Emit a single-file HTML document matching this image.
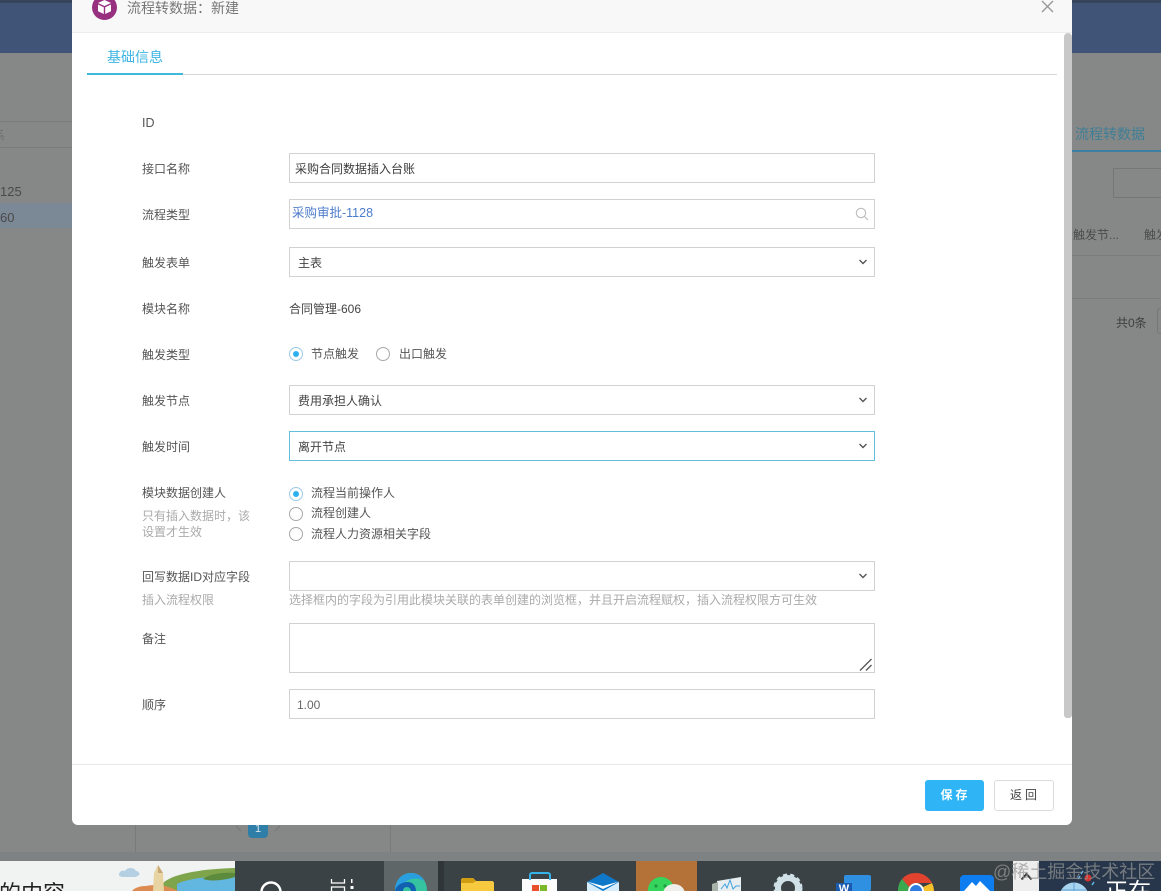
<!DOCTYPE html>
<html lang="zh">
<head>
<meta charset="utf-8">
<title>流程转数据：新建</title>
<style>
html,body{margin:0;padding:0;width:1161px;height:891px;overflow:hidden}
body{font-family:"Liberation Sans","Noto Sans CJK SC",sans-serif;font-size:12px;color:#444}
#root{position:relative;width:1161px;height:891px;overflow:hidden;background:#868787}
.a{position:absolute;white-space:nowrap}
.t{position:absolute;white-space:nowrap;line-height:16px}
.box{position:absolute;left:289px;width:586px;box-sizing:border-box;border:1px solid #d2d2d2;background:#fff;line-height:30px;padding-left:8px;color:#444}
.lab{position:absolute;left:142px;white-space:nowrap;line-height:16px;color:#555}
.hint{position:absolute;white-space:nowrap;line-height:16px;color:#aaa}
.chev{position:absolute;left:858px;width:10px;height:6px}
.r{position:absolute;width:14px;height:14px;box-sizing:border-box;border:1px solid #a8a8a8;border-radius:50%;background:#fff}
.r.on{border-color:#9cc9e6}
.r.on:after{content:"";position:absolute;left:3px;top:3px;width:6px;height:6px;border-radius:50%;background:#2db0ee}
</style>
</head>
<body>
<div id="root">
<!-- background page -->
<div class="a" style="left:0;top:0;width:1161px;height:53px;background:#3f5476"></div>
<div class="a" style="left:0;top:0;width:1161px;height:3px;background:#364559"></div>
<div class="a" style="left:0;top:121px;width:72px;height:27px;border-top:1px solid #7b7b7b;border-bottom:1px solid #7b7b7b;box-sizing:border-box"></div>
<div class="t" style="left:-7px;top:128px;color:#6e6e6e">系</div>
<div class="a" style="left:0;top:203px;width:72px;height:25px;background:#7b8896"></div>
<div class="t" style="left:0;top:184px;color:#4a4a4a;font-size:13px">125</div>
<div class="t" style="left:0;top:210px;color:#4a4a4a;font-size:13px">60</div>
<div class="t" style="left:1075px;top:126px;color:#3f7f95;font-size:14px">流程转数据</div>
<div class="a" style="left:1072px;top:150px;width:89px;height:2px;background:#3d7fa3"></div>
<div class="a" style="left:1113px;top:168px;width:60px;height:30px;box-sizing:border-box;border:1px solid #767676"></div>
<div class="t" style="left:1073px;top:227px;color:#4c4c4c">触发节...</div>
<div class="t" style="left:1144px;top:227px;color:#4c4c4c">触发</div>
<div class="a" style="left:1072px;top:255px;width:89px;height:1px;background:#7c7c7c"></div>
<div class="a" style="left:1072px;top:298px;width:89px;height:1px;background:#7c7c7c"></div>
<div class="t" style="left:1116px;top:315px;color:#3f3f3f">共0条</div>
<div class="a" style="left:1157px;top:308px;width:10px;height:26px;box-sizing:border-box;border:1px solid #767676;border-radius:3px"></div>
<div class="a" style="left:135px;top:825px;width:1px;height:27px;background:#7a7a7a"></div>
<div class="a" style="left:390px;top:825px;width:1px;height:27px;background:#7a7a7a"></div>
<div class="a" style="left:248px;top:825px;width:20px;height:13px;background:#2f7ea8;border-radius:0 0 4px 4px;color:#d5e4ec;text-align:center;line-height:8px;font-size:11px">1</div>
<svg class="a" style="left:234px;top:825px" width="48" height="10"><path d="M2 1l5 5M46 1l-5 5" stroke="#777" stroke-width="1" fill="none"/></svg>

<!-- taskbar -->
<div class="a" style="left:0;top:861px;width:1161px;height:30px;background:#3b4245"></div>
<div class="a" style="left:0;top:852px;width:1161px;height:9px;background:#7e8283"></div>
<div class="a" style="left:0;top:861px;width:235px;height:30px;background:#f1f3f3;overflow:hidden">
  <div class="a" style="left:-1px;top:20px;font-size:22px;line-height:26px;color:#222">的内容</div>
  <svg class="a" style="left:105px;top:0" width="130" height="30" viewBox="0 0 130 30">
    <path d="M14 14c0-4 4-5 6-4 2-4 9-4 11 0 3 0 4 3 3 4-1 1-3 2-5 2H18c-2 0-4-1-4-2z" fill="#b4cfe2"/>
    <path d="M58 22c8-8 34-14 72-15v23H50z" fill="#7ea54c"/>
    <path d="M72 23c12-6 34-8 58-8v15H72z" fill="#62b7e0"/>
    <path d="M98 18c6-5 20-7 32-6v4c-10 3-24 5-32 2z" fill="#5d8b3d"/>
    <path d="M27 30c3-4 10-5 14-5 8-2 22-1 32 5z" fill="#dc8b52"/>
    <path d="M48 30l1-18 4-8 5 8 1 18z" fill="#e8d3a2"/>
    <path d="M53 4l5 8h-5z" fill="#c9a878"/>
  </svg>
</div>
<svg class="a" style="left:258px;top:880px" width="26" height="11"><circle cx="13" cy="12" r="9.500" fill="none" stroke="#fff" stroke-width="2.400"/></svg>
<svg class="a" style="left:330px;top:878px" width="26" height="13"><path d="M1.500 1v4h13V1M1.500 13V9h13v4" fill="none" stroke="#fff" stroke-width="1.300"/><rect x="21" y="1" width="1.500" height="4" fill="#fff"/><rect x="20.500" y="8" width="3" height="3" fill="#fff"/></svg>
<div class="a" style="left:384px;top:861px;width:54px;height:30px;background:#5f6668"></div>
<div class="a" style="left:438px;top:861px;width:6px;height:30px;background:#2f3538"></div>
<svg class="a" style="left:392px;top:872px" width="38" height="19" viewBox="0 0 38 19">
  <path d="M3 19C3 8 10 1 19 1s16 7 16 18z" fill="#36c3a0"/>
  <path d="M3 19C3 8 10 1 19 1c7 0 12 4 13 8-4-3-14-4-20 2-3 3-3 6-3 8z" fill="#2a9fe0"/>
  <path d="M3 19c1-5 6-9 13-9 4 0 8 3 8 9h-5c0-2-2-4-4-4-3 0-4 2-4 4z" fill="#1261b0"/>
</svg>
<svg class="a" style="left:460px;top:877px" width="36" height="14" viewBox="0 0 36 14"><path d="M1 14V3c0-1 1-2 2-2h10l3 3h16c1 0 2 1 2 2v8z" fill="#f6c93f"/><path d="M1 6V3c0-1 1-2 2-2h10l3 3-3 2z" fill="#d09c12"/></svg>
<div class="a" style="left:522px;top:879px;width:35px;height:12px;background:#fbfbfb"></div>
<svg class="a" style="left:527px;top:872px" width="26" height="8"><path d="M3 8V3c0-1 1-2 2-2h16c1 0 2 1 2 2v5" fill="none" stroke="#35b4ea" stroke-width="2"/></svg>
<div class="a" style="left:532px;top:885px;width:7px;height:6px;background:#e8502c"></div>
<div class="a" style="left:540px;top:885px;width:7px;height:6px;background:#7cb82a"></div>
<svg class="a" style="left:584px;top:872px" width="38" height="19" viewBox="0 0 38 19"><path d="M3 19V10L19 1l16 9v9z" fill="#0f78c8"/><path d="M3 10l16 9 16-9v9H3z" fill="#d6eefb"/><path d="M3 9.500L19 14 35 9.500 19 17z" fill="#fff"/></svg>
<div class="a" style="left:636px;top:861px;width:61px;height:30px;background:#b47238"></div>
<svg class="a" style="left:646px;top:876px" width="42" height="15" viewBox="0 0 42 15"><ellipse cx="15" cy="14" rx="13" ry="13" fill="#35d45c"/><circle cx="10" cy="10" r="1.600" fill="#1f9c40"/><circle cx="19" cy="10" r="1.600" fill="#1f9c40"/><ellipse cx="28" cy="18" rx="11" ry="10" fill="#eeeeea"/></svg>
<svg class="a" style="left:711px;top:876px" width="36" height="15" viewBox="0 0 36 15"><path d="M6 15V5L30 1v14z" fill="#e8eef0"/><path d="M1 8l6-2v9H1z" fill="#a7b3a8"/><path d="M10 13l4-5 2 4 3-8 3 9 3-3h4" fill="none" stroke="#3da0df" stroke-width="1"/></svg>
<svg class="a" style="left:772px;top:872px" width="32" height="19" viewBox="0 0 32 19"><circle cx="16" cy="16" r="10" fill="none" stroke="#cfe0e6" stroke-width="6"/><circle cx="16" cy="16" r="13" fill="none" stroke="#cfe0e6" stroke-width="3" stroke-dasharray="4 3"/></svg>
<div class="a" style="left:844px;top:875px;width:27px;height:16px;background:#2f8fe0;border-radius:2px"></div>
<div class="a" style="left:836px;top:883px;width:16px;height:8px;background:#1a5bb0;color:#fff;font-size:11px;font-weight:bold;line-height:13px;text-align:center;overflow:hidden">W</div>
<svg class="a" style="left:897px;top:872px" width="38" height="19" viewBox="0 0 38 19"><path d="M19 1a18 18 0 0 1 16 10H19a8 8 0 0 0-7 4L5 7a18 18 0 0 1 14-6z" fill="#e2432f"/><path d="M35 11a18 18 0 0 1 2 8H27a8 8 0 0 0-1-4z" fill="#f5c22c"/><path d="M5 7l7 8a8 8 0 0 0-1 4H1a18 18 0 0 1 4-12z" fill="#3da94f"/><circle cx="19" cy="19" r="7" fill="#2f7de0" stroke="#fff" stroke-width="2"/></svg>
<svg class="a" style="left:960px;top:875px" width="34" height="16" viewBox="0 0 34 16"><path d="M0 16V4c0-2 2-4 4-4h26c2 0 4 2 4 4v12z" fill="#0d7df0"/><path d="M4 16l8-9 4 4 4-5 10 10z" fill="#fff"/></svg>
<div class="a" style="left:1013px;top:861px;width:26px;height:30px;background:#eeeeee"></div>
<svg class="a" style="left:1020px;top:871px" width="13" height="10"><path d="M1.500 8.500L6.500 3l5 5.500" fill="none" stroke="#3a3a3a" stroke-width="2"/></svg>
<div class="a" style="left:1039px;top:861px;width:122px;height:30px;background:#27364a"></div>
<svg class="a" style="left:1056px;top:868px" width="46" height="23" viewBox="0 0 46 23"><circle cx="18" cy="29" r="14.500" fill="#a9d4f0"/><path d="M18 15v14M6 22h24" stroke="#5ea5d8" stroke-width="1"/><circle cx="32" cy="10" r="3.500" fill="#d8312c"/><path d="M24 8l-2 3M38 14l-2 3M27 3l-2 3" stroke="#69b5e8" stroke-width="1.500"/></svg>
<div class="a" style="left:1105px;top:878px;font-size:23px;line-height:26px;color:#fff">正在</div>
<div class="a" style="left:993px;top:860px;font-size:18px;line-height:24px;color:rgba(150,150,150,.72)">@稀土掘金技术社区</div>

<!-- modal -->
<div class="a" style="left:72px;top:-10px;width:1000px;height:835px;background:#fff;border-radius:6px"></div>
<div class="a" style="left:72px;top:0;width:1000px;height:32px;background:#f8f8f8;border-bottom:1px solid #ececec;box-sizing:content-box"></div>
<svg class="a" style="left:92px;top:-5px" width="25" height="25" viewBox="0 0 25 25">
  <circle cx="12.500" cy="12.500" r="12.500" fill="#96307f"/>
  <path d="M12.500 5l6.500 3-6.500 3L6 8z" fill="#fff"/>
  <path d="M6 9.500l5.800 2.700V19L6 16.200zM19 9.500l-5.800 2.700V19l5.800-2.800z" fill="#fff"/>
</svg>
<div class="t" style="left:127px;top:0;font-size:14px;color:#777">流程转数据：新建</div>
<svg class="a" style="left:1041px;top:0" width="13" height="13"><path d="M1 1l11 11M12 1L1 12" stroke="#999" stroke-width="1.400" fill="none"/></svg>

<div class="t" style="left:107px;top:49px;font-size:14px;color:#3cb5e3">基础信息</div>
<div class="a" style="left:87px;top:74px;width:970px;height:1px;background:#d8d8d8"></div>
<div class="a" style="left:87px;top:73px;width:96px;height:2px;background:#3fb8de"></div>
<div class="a" style="left:1064px;top:33px;width:8px;height:685px;background:#c8c8c8;border-radius:4px 4px 3px 3px"></div>

<!-- form -->
<div class="lab" style="top:115px;font-size:12.500px">ID</div>

<div class="lab" style="top:161px">接口名称</div>
<div class="box" style="top:153px;height:30px;padding-left:5px;color:#3c3c3c">采购合同数据插入台账</div>

<div class="lab" style="top:207px">流程类型</div>
<div class="box" style="top:199px;height:30px;padding-left:2px;line-height:26px;color:#4d7ccb;font-size:12.500px">采购审批-1128</div>
<svg class="a" style="left:855px;top:207px" width="14" height="14"><circle cx="6" cy="6" r="4.700" fill="none" stroke="#bdbdbd" stroke-width="1.100"/><path d="M9.500 9.500l3.500 3.500" stroke="#bdbdbd" stroke-width="1.100"/></svg>

<div class="lab" style="top:255px">触发表单</div>
<div class="box" style="top:247px;height:30px">主表</div>
<svg class="chev" style="top:259px"><path d="M1.500 1l3.500 3.500L8.500 1" fill="none" stroke="#555" stroke-width="1.400"/></svg>

<div class="lab" style="top:301px">模块名称</div>
<div class="t" style="left:289px;top:301px;color:#444">合同管理-606</div>

<div class="lab" style="top:347px">触发类型</div>
<div class="r on" style="left:289px;top:347px"></div>
<div class="t" style="left:311px;top:346px;color:#555">节点触发</div>
<div class="r" style="left:376px;top:347px"></div>
<div class="t" style="left:399px;top:346px;color:#555">出口触发</div>

<div class="lab" style="top:393px">触发节点</div>
<div class="box" style="top:385px;height:30px">费用承担人确认</div>
<svg class="chev" style="top:397px"><path d="M1.500 1l3.500 3.500L8.500 1" fill="none" stroke="#555" stroke-width="1.400"/></svg>

<div class="lab" style="top:439px">触发时间</div>
<div class="box" style="top:431px;height:30px;border-color:#5fbfdc">离开节点</div>
<svg class="chev" style="top:443px"><path d="M1.500 1l3.500 3.500L8.500 1" fill="none" stroke="#555" stroke-width="1.400"/></svg>

<div class="lab" style="top:485px">模块数据创建人</div>
<div class="hint" style="left:142px;top:508px">只有插入数据时，该</div>
<div class="hint" style="left:142px;top:524px">设置才生效</div>
<div class="r on" style="left:289px;top:487px"></div>
<div class="t" style="left:311px;top:485px;color:#555">流程当前操作人</div>
<div class="r" style="left:289px;top:507px"></div>
<div class="t" style="left:311px;top:505px;color:#555">流程创建人</div>
<div class="r" style="left:289px;top:527px"></div>
<div class="t" style="left:311px;top:526px;color:#555">流程人力资源相关字段</div>

<div class="lab" style="top:569px">回写数据ID对应字段</div>
<div class="hint" style="left:142px;top:592px">插入流程权限</div>
<div class="box" style="top:561px;height:30px"></div>
<svg class="chev" style="top:573px"><path d="M1.500 1l3.500 3.500L8.500 1" fill="none" stroke="#555" stroke-width="1.400"/></svg>
<div class="hint" style="left:289px;top:592px">选择框内的字段为引用此模块关联的表单创建的浏览框，并且开启流程赋权，插入流程权限方可生效</div>

<div class="lab" style="top:631px">备注</div>
<div class="box" style="top:623px;height:50px"></div>
<svg class="a" style="left:859px;top:658px" width="14" height="14"><path d="M1 12.500L12.500 1M7 12.500L12.500 7" stroke="#555" stroke-width="1.300" fill="none"/></svg>

<div class="lab" style="top:697px">顺序</div>
<div class="box" style="top:689px;height:30px;padding-left:7px;color:#666">1.00</div>

<!-- footer -->
<div class="a" style="left:72px;top:764px;width:1000px;height:1px;background:#e8e8e8"></div>
<div class="a" style="left:925px;top:780px;width:59px;height:31px;background:#2fb5f5;border-radius:3px;color:#fff;text-align:center;line-height:31px;font-weight:bold;letter-spacing:3px;text-indent:2px">保存</div>
<div class="a" style="left:994px;top:780px;width:60px;height:31px;box-sizing:border-box;background:#fff;border:1px solid #dcdcdc;border-radius:3px;color:#444;text-align:center;line-height:29px;letter-spacing:3px;text-indent:2px">返回</div>
</div>
</body>
</html>
